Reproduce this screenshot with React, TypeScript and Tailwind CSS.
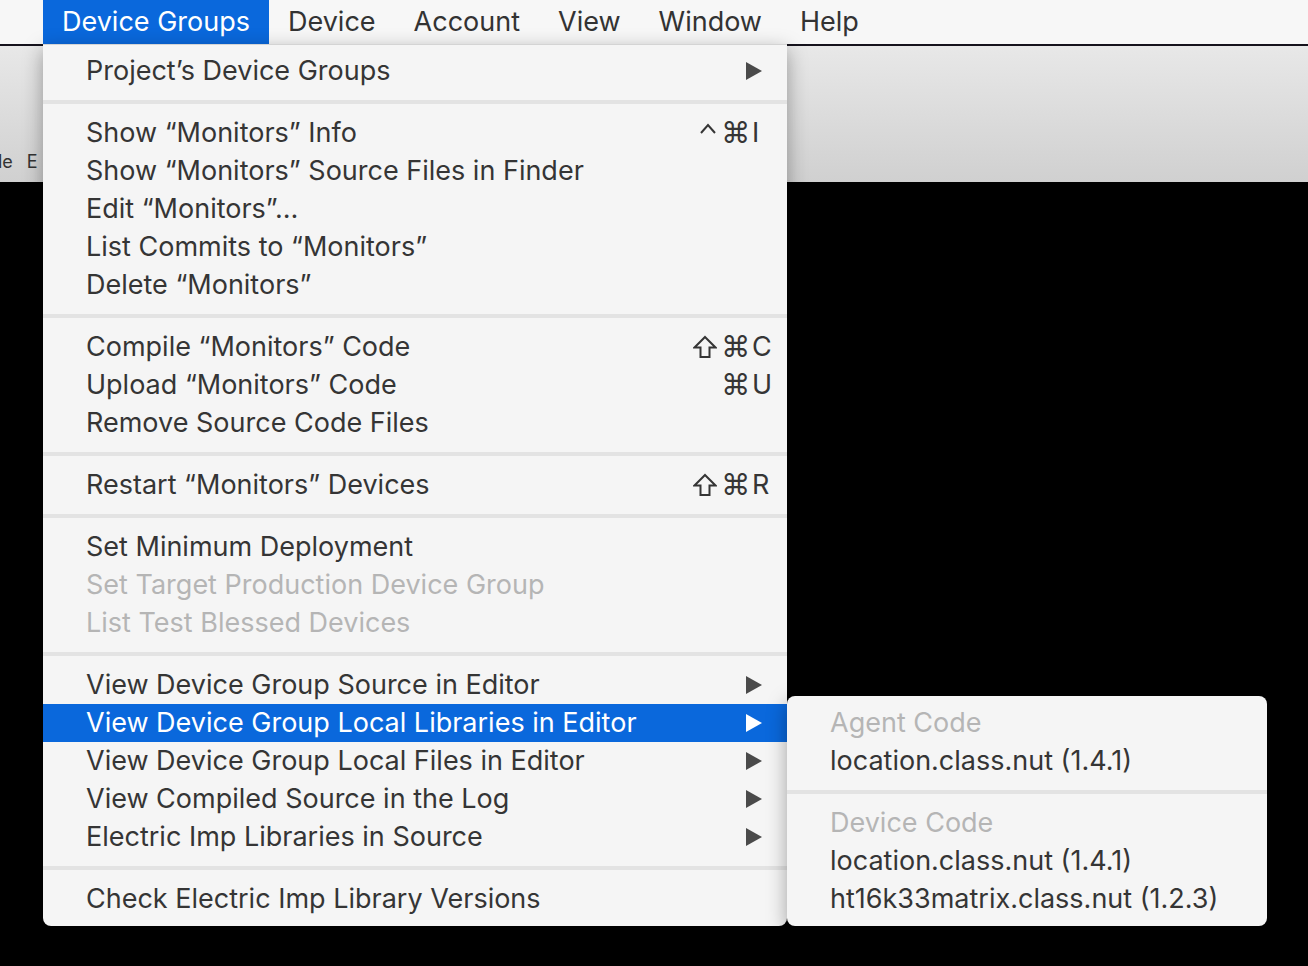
import React from 'react';

interface MenuItem {
  label: string;
  mods?: string[];
  keyChar?: string;
  arrow?: boolean;
  disabled?: boolean;
  active?: boolean;
}

const groups: MenuItem[][] = [
  [{ label: 'Project’s Device Groups', arrow: true }],
  [
    { label: 'Show “Monitors” Info', mods: ['ctrl', 'cmd'], keyChar: 'I' },
    { label: 'Show “Monitors” Source Files in Finder' },
    { label: 'Edit “Monitors”…' },
    { label: 'List Commits to “Monitors”' },
    { label: 'Delete “Monitors”' },
  ],
  [
    { label: 'Compile “Monitors” Code', mods: ['shift', 'cmd'], keyChar: 'C' },
    { label: 'Upload “Monitors” Code', mods: ['cmd'], keyChar: 'U' },
    { label: 'Remove Source Code Files' },
  ],
  [{ label: 'Restart “Monitors” Devices', mods: ['shift', 'cmd'], keyChar: 'R' }],
  [
    { label: 'Set Minimum Deployment' },
    { label: 'Set Target Production Device Group', disabled: true },
    { label: 'List Test Blessed Devices', disabled: true },
  ],
  [
    { label: 'View Device Group Source in Editor', arrow: true },
    { label: 'View Device Group Local Libraries in Editor', arrow: true, active: true },
    { label: 'View Device Group Local Files in Editor', arrow: true },
    { label: 'View Compiled Source in the Log', arrow: true },
    { label: 'Electric Imp Libraries in Source', arrow: true },
  ],
  [{ label: 'Check Electric Imp Library Versions' }],
];

const subGroups: MenuItem[][] = [
  [{ label: 'Agent Code', disabled: true }, { label: 'location.class.nut (1.4.1)' }],
  [
    { label: 'Device Code', disabled: true },
    { label: 'location.class.nut (1.4.1)' },
    { label: 'ht16k33matrix.class.nut (1.2.3)' },
  ],
];

const menuBar = ['Device Groups', 'Device', 'Account', 'View', 'Window', 'Help'];

const Arrow = ({ white }: { white?: boolean }) => (
  <svg width="18" height="18" viewBox="0 0 18 18" className="shrink-0">
    <path d="M1 0 L17 9 L1 18 Z" fill={white ? '#ffffff' : '#4a4a4a'} />
  </svg>
);

const ShiftIcon = () => (
  <svg width="24" height="24" viewBox="0 0 24 24" className="mr-[4px]">
    <path
      d="M12 2 L22.5 12.5 L16.5 12.5 L16.5 22 L7.5 22 L7.5 12.5 L1.5 12.5 Z"
      fill="none"
      stroke="currentColor"
      strokeWidth="2"
      strokeLinejoin="miter"
    />
  </svg>
);

const CtrlIcon = () => (
  <svg width="18" height="24" viewBox="0 0 18 24" className="mr-[4px]">
    <path d="M2 12 L9 4 L16 12" fill="none" stroke="currentColor" strokeWidth="2" />
  </svg>
);

const Mod = ({ name }: { name: string }) => {
  if (name === 'shift') return <ShiftIcon />;
  if (name === 'ctrl') return <CtrlIcon />;
  return (
    <span className="text-[29px] leading-none" style={{ fontFamily: '"DejaVu Sans", sans-serif' }}>
      ⌘
    </span>
  );
};

const Separator = () => <div className="my-[10px] h-[4px] bg-[#e3e3e3]" />;

const Row = ({ item }: { item: MenuItem }) => {
  const color = item.active
    ? 'bg-[#0a68dc] text-white'
    : item.disabled
      ? 'text-[#b5b5b5]'
      : 'text-[#353535]';
  return (
    <div className={`flex h-[38px] items-center pl-[43px] ${color}`}>
      <span className="flex-1 whitespace-nowrap">{item.label}</span>
      {item.arrow && (
        <div className="pr-[24px]">
          <Arrow white={item.active} />
        </div>
      )}
      {item.keyChar && (
        <div className="flex items-center pr-[17px]">
          <div className="flex w-[70px] items-center justify-end">
            {item.mods?.map((m) => <Mod key={m} name={m} />)}
          </div>
          <span className="w-[20px] pl-[2px]">{item.keyChar}</span>
        </div>
      )}
    </div>
  );
};

export default function App() {
  return (
    <div
      className="relative h-[966px] w-[1308px] overflow-hidden bg-black text-[27px]"
      style={{ fontFamily: 'Inter, "Noto Sans", sans-serif' }}
    >
      {/* menu bar */}
      <div className="flex h-[44px] items-center bg-[#f7f7f7] pl-[43px] text-[#333]">
        {menuBar.map((m, i) => (
          <div
            key={m}
            className={`flex h-[44px] items-center px-[19px] pt-[1px] ${i === 0 ? 'bg-[#0a68dc] text-white' : ''}`}
          >
            {m}
          </div>
        ))}
      </div>
      <div className="h-[2px] bg-[#15121c]" />

      {/* window toolbar behind the menu */}
      <div className="relative h-[136px] bg-gradient-to-b from-[#e8e8e8] to-[#d0d0d0]">
        <div className="absolute left-[-2px] top-[102px] flex gap-[14px] text-[18px] text-[#333]">
          <span>le</span>
          <span>E</span>
        </div>
      </div>

      {/* dropdown menu */}
      <div className="absolute left-[43px] top-[44px] w-[744px] rounded-b-[8px] border-t border-[#d4d4d4] bg-[#f5f5f5] pb-[8px] pt-[7px] shadow-[0_6px_20px_rgba(0,0,0,0.35)]">
        {groups.map((g, gi) => (
          <div key={gi}>
            {gi > 0 && <Separator />}
            {g.map((item) => (
              <Row key={item.label} item={item} />
            ))}
          </div>
        ))}
      </div>

      {/* submenu */}
      <div className="absolute left-[787px] top-[696px] w-[480px] rounded-[8px] bg-[#f5f5f5] pb-[8px] pt-[8px] shadow-[0_6px_20px_rgba(0,0,0,0.35)]">
        {subGroups.map((g, gi) => (
          <div key={gi}>
            {gi > 0 && <Separator />}
            {g.map((item, ii) => (
              <Row key={ii} item={item} />
            ))}
          </div>
        ))}
      </div>
    </div>
  );
}
